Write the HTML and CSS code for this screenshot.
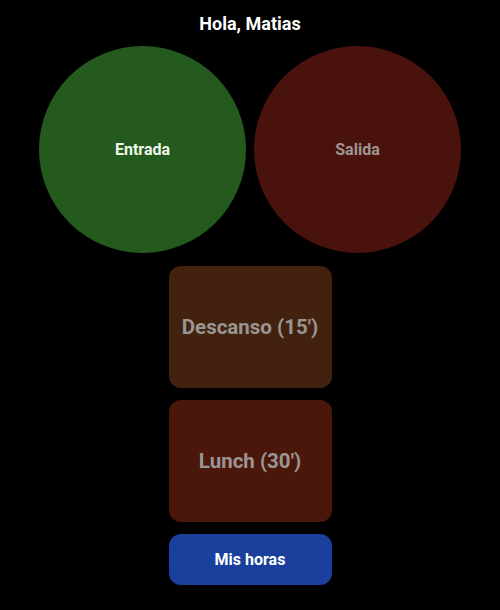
FILE: index.html
```html
<!DOCTYPE html>
<html lang="es">
<head>
<meta charset="utf-8">
<link rel="stylesheet" href="styles.css">
</head>
<body>
<main class="app">
  <h1 class="greeting">Hola, Matias</h1>
  <div class="circles">
    <button class="circle circle-in">Entrada</button>
    <button class="circle circle-out">Salida</button>
  </div>
  <div class="stack">
    <button class="tile tile-break">Descanso (15')</button>
    <button class="tile tile-lunch">Lunch (30')</button>
    <button class="hours">Mis horas</button>
  </div>
</main>
</body>
</html>
```
FILE: styles.css
```css
html, body {
  margin: 0;
  padding: 0;
  background: #000;
}
body {
  width: 500px;
  height: 610px;
  font-family: Roboto, "Noto Sans", sans-serif;
}
.app {
  display: flex;
  flex-direction: column;
  align-items: center;
}
.greeting {
  margin: 13px 0 0;
  font-size: 18px;
  line-height: 21px;
  font-weight: 700;
  color: #fff;
}
.circles {
  display: flex;
  gap: 8px;
  margin-top: 12px;
}
button {
  border: none;
  padding: 0;
  font-family: inherit;
  font-weight: 700;
  cursor: pointer;
}
.circle {
  width: 207px;
  height: 207px;
  border-radius: 50%;
  font-size: 16px;
}
.circle-in {
  background: #245a1e;
  color: #eef6ea;
}
.circle-out {
  background: #4a120d;
  color: #9c9693;
}
.stack {
  display: flex;
  flex-direction: column;
  gap: 12px;
  margin-top: 13px;
}
.tile {
  width: 163px;
  height: 122px;
  border-radius: 12px;
  font-size: 20.5px;
  color: #9a9592;
}
.tile-break {
  background: #42220e;
}
.tile-lunch {
  background: #4b170b;
}
.hours {
  width: 163px;
  height: 51px;
  border-radius: 12px;
  background: #1a3f9c;
  color: #fff;
  font-size: 16px;
}
```
